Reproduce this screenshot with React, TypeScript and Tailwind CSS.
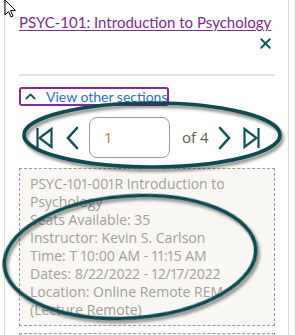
import { X, ChevronUp } from 'lucide-react';

const lines = [
  'PSYC-101-001R Introduction to',
  'Psychology',
  'Seats Available: 35',
  'Instructor: Kevin S. Carlson',
  'Time: T 10:00 AM - 11:15 AM',
  'Dates: 8/22/2022 - 12/17/2022',
  'Location: Online Remote REM',
  '(Lecture Remote)',
];

const teal = '#0f5257';

function FirstIcon() {
  return (
    <svg width="17" height="24" viewBox="0 0 17 24" fill="none" stroke={teal} strokeWidth="2.2">
      <line x1="1.5" y1="2" x2="1.5" y2="22" />
      <path d="M15.5 3 L3.5 12 L15.5 21 Z" />
    </svg>
  );
}

function LastIcon() {
  return (
    <svg width="17" height="24" viewBox="0 0 17 24" fill="none" stroke={teal} strokeWidth="2.2">
      <line x1="15.5" y1="2" x2="15.5" y2="22" />
      <path d="M1.5 3 L13.5 12 L1.5 21 Z" />
    </svg>
  );
}

function Chevron({ dir }: { dir: 'left' | 'right' }) {
  return (
    <svg width="13" height="24" viewBox="0 0 13 24" fill="none" stroke={teal} strokeWidth="2.6" strokeLinecap="round">
      {dir === 'left' ? <path d="M11 2 L2 12 L11 22" /> : <path d="M2 2 L11 12 L2 22" />}
    </svg>
  );
}

function Annotations() {
  return (
    <svg className="absolute inset-0 pointer-events-none" width="295" height="335" viewBox="0 0 295 335">
      <defs>
        <filter id="sh" x="-20%" y="-20%" width="140%" height="140%">
          <feDropShadow dx="2" dy="3" stdDeviation="1.8" floodColor="#000" floodOpacity="0.45" />
        </filter>
      </defs>
      <ellipse cx="152" cy="135" rx="128" ry="32" fill="none" stroke="#0f4c50" strokeWidth="3.7" filter="url(#sh)" />
      <ellipse cx="130" cy="257" rx="126" ry="61" fill="none" stroke="#0f4c50" strokeWidth="3.7" filter="url(#sh)" transform="rotate(-4 130 257)" />
      {/* mouse pointer */}
      <path d="M5 0 L5 15 L8.5 11.5 L11 17 L13 16 L10.5 10.5 L15.5 10.5 Z" fill="#fff" stroke="#000" strokeWidth="1" strokeLinejoin="round" />
    </svg>
  );
}

export default function App() {
  return (
    <div className="relative w-[295px] h-[335px] overflow-hidden bg-white" style={{ fontFamily: 'Lato, "Open Sans", sans-serif' }}>
      <div className="ml-[4px] w-[285px] h-full border-x border-[#dcdcdc] pl-[14px] pr-[13px] pt-[12px]">
        {/* Title */}
        <a className="block text-[15px] leading-[20px] text-[#7d2a93] underline underline-offset-2 whitespace-nowrap">
          PSYC-101: Introduction to Psychology
        </a>
        <div className="flex justify-end pr-[1px] mt-[3px]">
          <X className="w-[17px] h-[17px] text-[#0f5257]" strokeWidth={2.6} />
        </div>

        <div className="mt-[22px] h-[2px] bg-[#e0e0e0]" />

        {/* View other sections */}
        <button className="mt-[11px] flex items-center h-[19px] w-[150px] border-2 border-[#86299a] rounded-[3px] pl-[1px] gap-[7px] whitespace-nowrap">
          <ChevronUp className="w-[17px] h-[17px] text-[#0f5257] shrink-0" strokeWidth={2.6} />
          <span className="text-[14px] leading-none text-[#2870d6]">View other sections</span>
        </button>

        {/* Pagination */}
        <div className="mt-[11px] flex items-center h-[41px] pl-[17px]">
          <FirstIcon />
          <div className="ml-[13px]">
            <Chevron dir="left" />
          </div>
          <div className="ml-[10px] w-[81px] h-[41px] border border-[#9a9a9a] rounded-[8px] flex items-center pl-[14px] text-[15px] text-[#c47a1a]" style={{ fontFamily: '"Open Sans", sans-serif' }}>
            1
          </div>
          <span className="ml-[12px] text-[15px] text-[#6b5c4c]" style={{ fontFamily: '"Open Sans", sans-serif' }}>of 4</span>
          <div className="ml-[9px]">
            <Chevron dir="right" />
          </div>
          <div className="ml-[12px]">
            <LastIcon />
          </div>
        </div>

        {/* Section card */}
        <div className="mt-[10px] h-[158px] border border-dashed border-[#9c9c9c] bg-[#f8f7f3] pl-[10px] pt-[6px]">
          {lines.map((l) => (
            <div key={l} className="text-[14px] leading-[18px] text-[#a39f9a] whitespace-nowrap proportional-nums" style={{ fontFamily: '"Open Sans", sans-serif' }}>
              {l}
            </div>
          ))}
        </div>
        <div className="mt-[7px] h-[20px] border border-dashed border-[#9c9c9c] bg-[#f8f7f3]" />
      </div>
      <Annotations />
    </div>
  );
}
